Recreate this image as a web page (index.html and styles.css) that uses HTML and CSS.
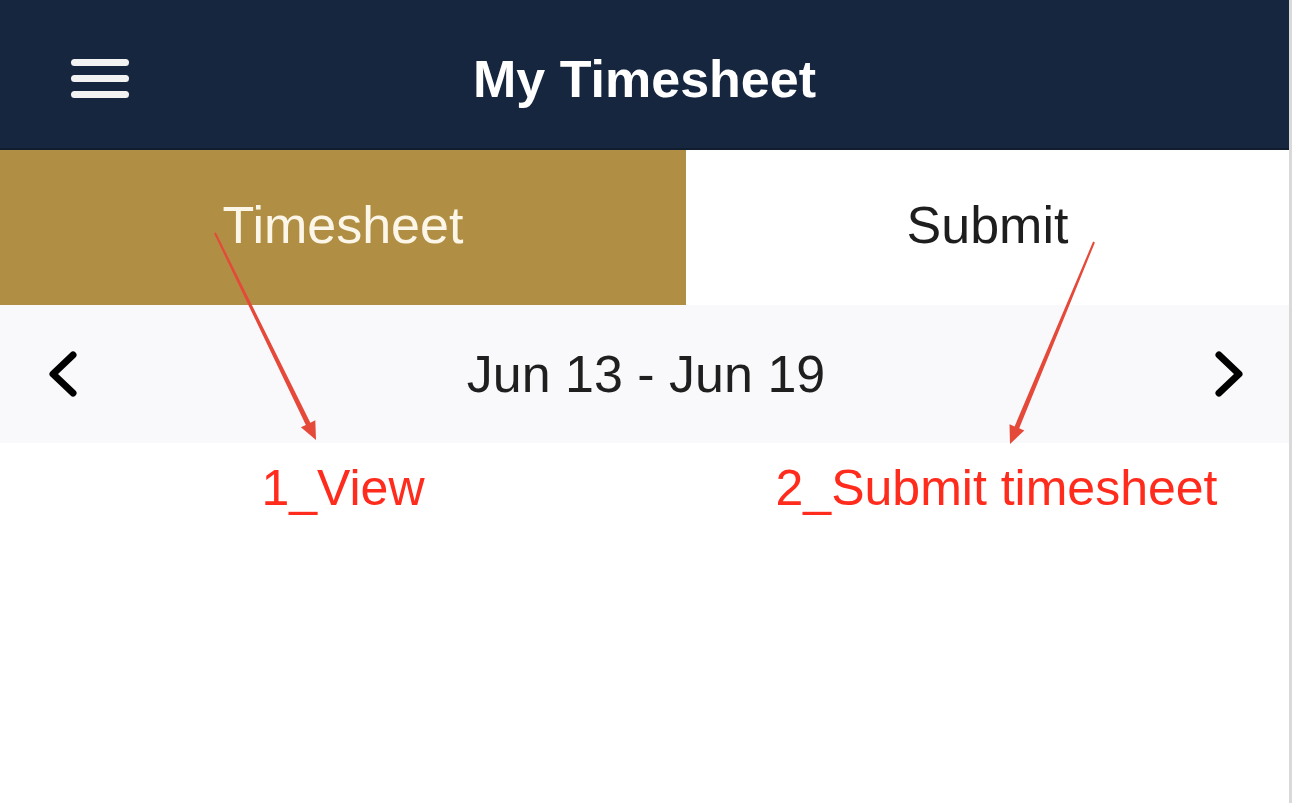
FILE: index.html
```html
<!DOCTYPE html>
<html lang="en">
<head>
  <meta charset="UTF-8" />
  <meta name="viewport" content="width=device-width, initial-scale=1.0"/>
  <title>My Timesheet</title>
  <link rel="stylesheet" href="styles.css">
</head>
<body>

  <div class="app">
    <header class="topbar">
      <button class="menu-btn" aria-label="Menu">
        <span></span><span></span><span></span>
      </button>
      <h1>My Timesheet</h1>
    </header>

    <nav class="tabs">
      <div class="tab active">Timesheet</div>
      <div class="tab">Submit</div>
    </nav>

    <div class="week-bar">
      <button class="chev" aria-label="Previous week">
        <svg width="30" height="48" viewBox="0 0 30 48"><polyline points="25,5 5,24 25,43" fill="none" stroke="#000" stroke-width="7" stroke-linecap="round" stroke-linejoin="round"/></svg>
      </button>
      <span class="week-label">Jun 13 - Jun 19</span>
      <button class="chev" aria-label="Next week">
        <svg width="30" height="48" viewBox="0 0 30 48"><polyline points="5,5 25,24 5,43" fill="none" stroke="#000" stroke-width="7" stroke-linecap="round" stroke-linejoin="round"/></svg>
      </button>
    </div>

    <div class="notes">
      <p>1_View</p>
      <p>2_Submit timesheet</p>
    </div>

    <!-- annotation arrows drawn over the screen -->
    <svg class="arrows" width="1295" height="803" viewBox="0 0 1295 803">
      <polygon points="215.9,232.56 310.35,422.7 315.3,420.3 316,440 300.9,427.3 305.85,424.9 214.1,233.44" fill="#e5493a"/>
      <polygon points="1094.92,242.38 1019.21,428.36 1024.3,430.5 1010,444 1009.5,424.3 1014.59,426.44 1093.08,241.62" fill="#e5493a"/>
    </svg>
  </div>

</body>
</html>
```

FILE: styles.css
```css
* {
  box-sizing: border-box;
}
body {
  margin: 0;
  background: #fff;
  font-family: "Liberation Sans", Arial, sans-serif;
}
.app {
  position: relative;
  width: 1292px;
  height: 803px;
  background: #fff;
  border-right: 3px solid #d9d9d9;
}
.topbar {
  height: 150px;
  background: #16263f;
  border-bottom: 2px solid #111c2e;
  display: flex;
  align-items: center;
  justify-content: center;
  padding-top: 10px;
  position: relative;
}
.topbar h1 {
  margin: 0;
  color: #fff;
  font-size: 52px;
  font-weight: bold;
}
.menu-btn {
  position: absolute;
  left: 71px;
  top: 59px;
  width: 58px;
  background: none;
  border: none;
  padding: 0;
  display: flex;
  flex-direction: column;
  gap: 9px;
}
.menu-btn span {
  display: block;
  height: 7px;
  border-radius: 4px;
  background: #f2f2f2;
}
.tabs {
  display: grid;
  grid-template-columns: 686px 1fr;
  height: 155px;
}
.tab {
  display: flex;
  align-items: center;
  justify-content: center;
  padding-bottom: 6px;
  font-size: 52px;
  color: #1e1e1e;
  background: #fff;
}
.tab.active {
  background: #b08f44;
  color: #fbf6e8;
}
.week-bar {
  height: 138px;
  background: #f9f8fb;
  display: flex;
  align-items: center;
  justify-content: space-between;
  padding: 0 45px 0 48px;
}
.week-label {
  font-size: 52px;
  color: #1f1f1f;
}
.chev {
  background: none;
  border: none;
  padding: 0;
  display: flex;
}
.notes {
  display: grid;
  grid-template-columns: 686px 1fr;
  padding-top: 16px;
}
.notes p {
  margin: 0;
  text-align: center;
  font-size: 50px;
  color: #ff2b1c;
}
.notes p:last-child {
  padding-left: 18px;
}
.arrows {
  position: absolute;
  left: 0;
  top: 0;
  pointer-events: none;
}
```
